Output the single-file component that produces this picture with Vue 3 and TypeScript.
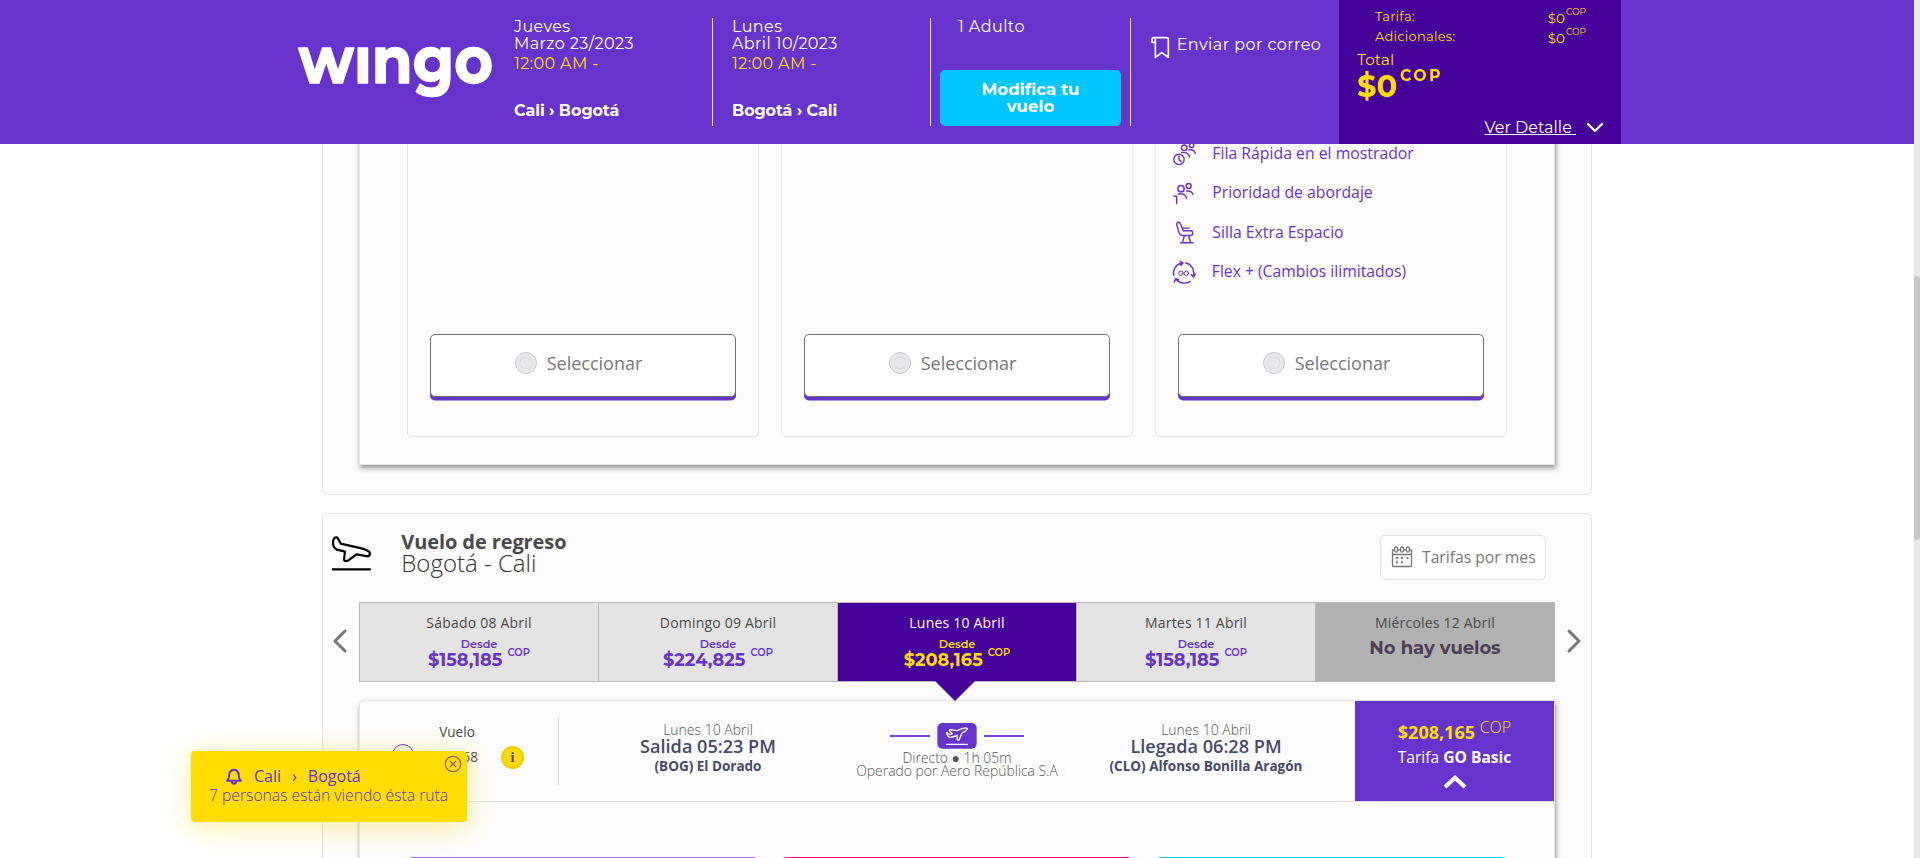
<script setup lang="ts">
interface Trip { day: string; date: string; time: string; route: string }
interface DayFare { date: string; price?: string; state?: 'active' | 'disabled' }

const trips: Trip[] = [
  { day: 'Jueves', date: 'Marzo 23/2023', time: '12:00 AM -', route: 'Cali › Bogotá' },
  { day: 'Lunes', date: 'Abril 10/2023', time: '12:00 AM -', route: 'Bogotá › Cali' },
]
const charges = ['Tarifa:', 'Adicionales:']
const days: DayFare[] = [
  { date: 'Sábado 08 Abril', price: '$158,185' },
  { date: 'Domingo 09 Abril', price: '$224,825' },
  { date: 'Lunes 10 Abril', price: '$208,165', state: 'active' },
  { date: 'Martes 11 Abril', price: '$158,185' },
  { date: 'Miércoles 12 Abril', state: 'disabled' },
]
const fares = ['violet', 'pink', 'cyan']
</script>

<template>
  <div class="page">
    <header class="top">
      <svg class="logo" viewBox="0 0 196 60" width="196" height="60">
        <text x="0.5" y="41" textLength="194.5" lengthAdjust="spacingAndGlyphs">wıngo</text>
      </svg>
      <section v-for="t in trips" :key="t.day" class="trip">
        <div>{{ t.day }}</div>
        <div>{{ t.date }}</div>
        <div class="time">{{ t.time }}</div>
        <strong>{{ t.route }}</strong>
      </section>
      <section class="people">
        <span>1 Adulto</span>
        <button class="modify">Modifica tu<br>vuelo</button>
      </section>
      <section class="mail">
        <svg viewBox="94 108 56 70" width="18.7" height="23.3">
          <path d="M104 127h-7v-10q0-4 5-4h38q6 0 6 5v54l-20-14-19 14v-56" />
        </svg>
        <span>Enviar por correo</span>
      </section>
      <section class="summary">
        <div v-for="c in charges" :key="c" class="charge">
          <span>{{ c }}</span><span class="amount">$0<sup>COP</sup></span>
        </div>
        <div class="total-label">Total</div>
        <div class="total">$0<sup>COP</sup></div>
        <div class="detail">
          <span>Ver Detalle&nbsp;</span>
          <svg viewBox="0 0 18 12" width="18" height="12"><path d="M2 2l7 7 7-7" /></svg>
        </div>
      </section>
    </header>

    <main>
      <section class="panel first">
        <div class="sheet">
          <div class="cards">
            <article v-for="(f, i) in fares" :key="f" class="card">
              <ul v-if="i === 2" class="features">
                <li>
                  <svg viewBox="96 31.6 76 76">
                    <circle cx="117" cy="90" r="15.5" /><path d="M117 80v10l6 6" />
                    <circle cx="133" cy="55" r="8.5" /><circle cx="155" cy="48" r="6.5" />
                    <path d="M125 69c13-1 22 4 24 14M147 61c10-1 17 3 19 11" />
                  </svg>
                  Fila Rápida en el mostrador
                </li>
                <li>
                  <svg viewBox="96 151 76 76">
                    <path d="M102 200h8v22" />
                    <circle cx="123" cy="177" r="9.5" /><circle cx="146" cy="169" r="7.5" />
                    <path d="M115 193c13-3 23 3 25 13M140 184c10-1 17 3 19 11" />
                  </svg>
                  Prioridad de abordaje
                </li>
                <li>
                  <svg viewBox="96 268.6 76 76">
                    <path d="M110 284c0-7 9-7 11-1l9 21h24c4 0 4 3 4 8s-2 6-6 6h-25c-6 0-8-3-10-8zM127 296h21M133 319l-5 20M146 319l6 20M122 340h37" />
                  </svg>
                  Silla Extra Espacio
                </li>
                <li class="flexible">
                  <svg viewBox="96 387 76 76">
                    <path d="M101 436c-3-20 9-35 27-37M120 394l9 5-6 7M137 399c17 3 27 19 24 38M154 434l7 7 5-8M151 454c-14 9-33 7-43-6M103 456l4-10 9 3" />
                    <circle cx="123" cy="430" r="6.5" class="thin" /><circle cx="139" cy="430" r="6.5" class="thin" />
                  </svg>
                  Flex + (Cambios ilimitados)
                </li>
              </ul>
              <button class="select"><i class="radio"></i>Seleccionar</button>
            </article>
          </div>
        </div>
      </section>

      <section class="panel second">
        <div class="heading">
          <svg class="landing" viewBox="66 109 118 106" width="39.3" height="35.3">
            <path d="M70 122q2-10 10-9 4 2 12 19l66 15q20 6 22 14 0 9-9 9l-31-6-23 17q-11 7-15-1l3-24-24-6q-15-7-11-28z" />
            <path d="M68 209h112" />
          </svg>
          <div class="titles">
            <h2>Vuelo de regreso</h2>
            <p>Bogotá - Cali</p>
          </div>
          <button class="monthly">
            <svg viewBox="0 0 22 22" width="22" height="22">
              <path d="M1.5 4h1.5M7 4h1.5M13 4h1.5M19 4h1.5M1.5 4v15.5q0 1 1 1h17q1 0 1-1V4M1.5 8.5h19" />
              <rect x="3.6" y="1" width="3" height="5" rx="1.5" /><rect x="9.5" y="1" width="3" height="5" rx="1.5" /><rect x="15.4" y="1" width="3" height="5" rx="1.5" />
              <path class="dots" d="M5 12h2M10 12h2M15.5 12h2M5 16.2h2M10 16.2h2" />
            </svg>
            Tarifas por mes
          </button>
        </div>

        <div class="dates">
          <svg class="arrow" viewBox="0 0 16 26" width="16" height="26"><path d="M13 3L3 13l10 10" /></svg>
          <div class="strip">
            <div v-for="d in days" :key="d.date" class="day" :class="d.state">
              <div class="date">{{ d.date }}</div>
              <template v-if="d.price">
                <div class="from">Desde</div>
                <div class="price">{{ d.price }} <sup>COP</sup></div>
              </template>
              <div v-else class="none">No hay vuelos</div>
            </div>
          </div>
          <svg class="arrow" viewBox="0 0 16 26" width="16" height="26"><path d="M3 3l10 10L3 23" /></svg>
        </div>

        <div class="sheet flight">
          <div class="row">
            <div class="number">
              <i class="radio ring"></i>
              <div class="code"><div>Vuelo</div><div class="id">P5658</div></div>
              <i class="info">i</i>
            </div>
            <div class="stop depart">
              <span>Lunes 10 Abril</span><b>Salida 05:23 PM</b><strong>(BOG) El Dorado</strong>
            </div>
            <div class="middle">
              <div class="line">
                <svg viewBox="351 430 120 78" width="40" height="26">
                  <rect x="352" y="430" width="118" height="77" rx="15" />
                  <path d="M380 458q0 10 8 15 14-1 23-6l1 13q3 5 6-1l8-19q16-9 16-13-3-5-15 0l-16 6-19-3q-7 0-1 6l6 6-8 3z" />
                  <path d="M380 494h62" />
                </svg>
              </div>
              <span>Directo ● 1h 05m</span>
              <span>Operado por Aero República S.A</span>
            </div>
            <div class="stop arrive">
              <span>Lunes 10 Abril</span><b>Llegada 06:28 PM</b><strong>(CLO) Alfonso Bonilla Aragón</strong>
            </div>
            <div class="fare">
              <div class="cost"><b>$208,165</b> <sup>COP</sup></div>
              <div class="kind">Tarifa <b>GO Basic</b></div>
              <svg viewBox="0 0 24 14" width="24" height="14"><path d="M2 12L12 2.8 22 12" /></svg>
            </div>
          </div>
          <div class="cards lower">
            <article v-for="f in fares" :key="f" class="card" :class="f"></article>
          </div>
        </div>
      </section>
    </main>

    <aside class="toast">
      <svg class="close" viewBox="0 0 18 18" width="18" height="18"><circle cx="9" cy="9" r="7.7" /><path d="M6.2 6.2l5.6 5.6M11.8 6.2l-5.6 5.6" /></svg>
      <div class="route">
        <svg viewBox="0 0 16 17" width="16" height="17"><path d="M1 12.8q2.2-1.6 2.2-5 0-5.6 4.8-6 4.8.4 4.8 6 0 3.4 2.2 5zM5.6 13.5q.4 2.2 2.4 2.2t2.4-2.2" /></svg>
        <span>Cali</span><span class="sep">›</span><span>Bogotá</span>
      </div>
      <p>7 personas están viendo ésta ruta</p>
    </aside>

    <div class="scrollbar"><i></i></div>
  </div>
</template>

<style>
html, body { overflow: hidden; background: #fff; }
</style>

<style scoped>
* { box-sizing: border-box; }
.page { position: relative; width: 1920px; height: 858px; overflow: hidden; background: #fff; font-family: "Open Sans", "Noto Sans", sans-serif; color: #4a4a4a; }
svg { fill: none; stroke: currentColor; stroke-linecap: round; stroke-linejoin: round; flex: none; }
button { font: inherit; color: inherit; margin: 0; }
h2, p, ul { margin: 0; padding: 0; }

/* top bar */
.top { position: relative; z-index: 2; display: flex; align-items: flex-start; width: 1914px; height: 144px; padding-left: 298px; background: #6633cc; color: #fff; font: 400 16px/17.2px "Montserrat", "Inter", sans-serif; }
.logo { margin-top: 42px; width: 196px; height: 60px; overflow: visible; }
.logo text { font: 700 65px "Montserrat", "Inter", sans-serif; fill: #fff; stroke: #fff; stroke-width: 1.6px; }
.trip { width: 218px; height: 108px; margin-top: 18px; padding-left: 19px; border-right: 1px solid rgba(255,255,255,.85); letter-spacing: .4px; white-space: nowrap; }
.logo + .trip { width: 199px; margin-left: 20px; padding-left: 0; }
.trip .time { margin-top: 2px; color: #ffdd00; line-height: 20px; }
.trip strong { display: block; margin-top: 27px; font-weight: 700; line-height: 20px; letter-spacing: -.1px; }
.people { width: 200px; height: 108px; margin-top: 18px; border-right: 1px solid rgba(255,255,255,.85); }
.people > span { display: block; padding-left: 27px; letter-spacing: .45px; }
.modify { display: block; width: 181px; height: 56px; margin: 35px 0 0 9px; padding: 0; border: 0; border-radius: 5px; background: #00c8ff; color: #fff; font-weight: 700; font-size: 16.6px; line-height: 17px; }
.mail { display: flex; width: 208px; padding: 36px 0 0 20px; letter-spacing: .45px; white-space: nowrap; }
.mail svg { stroke-width: 5; margin-right: 7px; }
.summary { width: 282px; height: 144px; padding-left: 18px; background: #440099; color: #ffdd00; }
.charge { display: flex; justify-content: space-between; height: 20px; padding: 6px 35px 0 18px; font-size: 13px; line-height: 20px; letter-spacing: .25px; }
.amount { font-size: 13.5px; line-height: 24px; letter-spacing: 0; }
sup { vertical-align: baseline; position: relative; line-height: 0; }
.amount sup { top: -8.5px; font-size: 9px; margin-left: 1px; }
.total-label { margin-top: 10px; line-height: 20px; font-size: 15.5px; }
.total { margin-top: -2px; font-weight: 700; font-size: 30.4px; line-height: 38px; }
.total sup { top: -16px; margin-left: 3px; font-size: 15.5px; letter-spacing: 2.6px; }
.detail { display: flex; align-items: center; justify-content: flex-end; margin-top: 12px; padding-right: 17px; line-height: 20px; color: #fff; }
.detail span { text-decoration: underline; margin-right: 10px; }
.detail svg { stroke-width: 2.4; }

/* panels */
main { width: 1270px; margin: -24px 0 0 322px; }
.panel { border: 1px solid #e6e6e6; background: #fcfcfc; }
.first { height: 375px; padding: 0 36px; border-radius: 0 0 5px 5px; }
.sheet { border: 1px solid #e6e6e6; background: #fcfcfc; box-shadow: 1px 3px 5px rgba(0,0,0,.42); }
.first .sheet { height: 344px; padding: 0 47px; border-top: 0; }
.cards { display: flex; gap: 22px; }
.card { display: flex; flex-direction: column; justify-content: flex-end; width: 352px; height: 316px; padding: 0 22px 39px; border: 1px solid #e6e6e6; border-top: 0; border-radius: 0 0 5px 5px; }
.features { flex: 1; list-style: none; padding: 12px 0 0; margin-left: -6px; color: #6633cc; }
.features li { display: flex; align-items: center; height: 39.5px; font-size: 15.8px; line-height: 22px; white-space: nowrap; }
.features svg { width: 25.3px; height: 25.3px; margin-right: 15px; stroke-width: 4.3; }
.features .flexible { font-size: 15.7px; }
.features .flexible svg { margin-right: 14.5px; }
.features .thin { stroke-width: 3; }
.select { display: flex; align-items: center; justify-content: center; height: 63px; padding: 0 9px 6px 0; border: 1px solid #707070; border-radius: 5px; background: #fff; box-shadow: 0 3.4px 0 #6633cc; color: #777; font-size: 18px; }
.radio { width: 22px; height: 22px; margin-right: 10px; border: 1px solid #c4c6c8; border-radius: 50%; background: radial-gradient(circle, #e8e9eb 5px, #dadbdd 6px, #e8e9eb 7px); }

.second { height: 420px; margin-top: 18px; padding: 0 9px; border-radius: 5px 5px 0 0; }
.heading { display: flex; height: 88px; padding-right: 36px; }
.landing { margin-top: 22px; color: #000; stroke-width: 6.5; }
.titles { flex: 1; margin: 15px 0 0 30px; }
h2 { font-size: 20px; line-height: 24px; font-weight: 700; letter-spacing: -.1px; padding-top: 1px; }
.titles p { margin-top: -4.6px; font-size: 24px; line-height: 28px; font-weight: 300; color: #333; }
.monthly { display: flex; align-items: center; width: 166px; height: 45px; margin-top: 21px; padding: 0 0 2px 10px; border: 1px solid #e3e3e3; border-radius: 5px; background: #fff; color: #777; font-size: 15.7px; white-space: nowrap; }
.monthly svg { margin-right: 9px; stroke-width: 1.3; }
.monthly .dots { stroke-width: 2; stroke-linecap: butt; }
.dates { display: flex; align-items: center; height: 80px; }
.arrow { margin-bottom: 3px; color: #777; stroke-width: 3; }
.strip { display: flex; width: 1196px; height: 80px; margin: 0 11px 0 11px; border: 1px solid #b9b9b9; }
.day { position: relative; flex: 1; padding-top: 10px; border-left: 1px solid #b9b9b9; background: #e4e4e4; text-align: center; }
.day:first-child { border-left: 0; }
.date { font-size: 14px; line-height: 20px; letter-spacing: .2px; }
.from { margin-top: 4px; color: #6633cc; font: 600 11.2px/14px "Montserrat", "Inter", sans-serif; }
.price { color: #6633cc; font: 700 17.8px/18px "Montserrat", "Inter", sans-serif; white-space: nowrap; }
.price sup { top: -10px; font-size: 10px; font-weight: 600; }
.active { background: #440099; color: #fff; }
.active .from, .active .price { color: #ffdd00; }
.active::after { content: ""; position: absolute; left: 97px; bottom: -20px; border: 20px solid transparent; border-width: 20px 20px 0; border-top-color: #440099; z-index: 1; }
.disabled { background: #b1b1b1; }
.none { margin-top: 2px; color: #4b4056; font: 700 18px/27px "Montserrat", "Inter", sans-serif; letter-spacing: -.05px; }

.flight { height: 200px; width: 1196px; margin: 18px 0 0 27px; border-radius: 5px 0 0 0; }
.row { display: flex; height: 101px; border-bottom: 1px solid #dedede; }
.number { display: flex; width: 199px; height: 68px; margin-top: 16px; border-right: 1px solid #dedede; font-size: 13.6px; line-height: 25px; }
.ring { margin: 27px 8px 0 32px; border-color: #6633cc; background: #eee; }
.code { width: 62px; margin-left: 4px; padding-top: 2px; text-align: center; }
.code .id { padding-left: 3px; }
.info { width: 23px; height: 23px; margin: 29px 0 0 13px; border: 2px solid #f6cb08; border-radius: 50%; background: #ffdd00; color: #6633cc; font: 700 14px/19px "Liberation Serif", serif; text-align: center; }
.stop { display: flex; flex-direction: column; align-items: center; padding-top: 20px; white-space: nowrap; }
.stop span { font-size: 14px; font-weight: 300; line-height: 18px; color: #555; }
.stop b { margin-top: -2px; font-size: 18.1px; font-weight: 600; line-height: 18px; color: #47496b; }
.stop strong { padding-top: 1px; font-size: 13.5px; font-weight: 700; line-height: 20px; color: #47496b; }
.depart { width: 298px; }
.middle { display: flex; flex-direction: column; align-items: center; width: 200px; white-space: nowrap; font-size: 13.9px; font-weight: 300; line-height: 13px; color: #555; }
.line { display: flex; justify-content: space-between; align-items: center; width: 134px; margin: 22px 0 2px; color: #fff; }
.line::before, .line::after { content: ""; width: 40px; height: 2px; background: #6633cc; opacity: .9; }
.line svg { stroke-width: 4; }
.line rect { fill: #6633cc; stroke: none; }
.arrive { width: 298px; }
.fare { display: flex; flex-direction: column; align-items: center; width: 199px; height: 100px; padding-top: 17px; background: #6633cc; color: #fff; font-size: 15.6px; white-space: nowrap; }
.cost { color: #ffdd00; font-size: 18px; line-height: 28px; }
.cost sup { top: -6.5px; font-size: 16px; font-weight: 300; }
.kind { line-height: 22px; }
.kind b { font-weight: 700; }
.fare svg { margin-top: 7px; stroke-width: 4; stroke-linecap: butt; stroke-linejoin: miter; }
.lower { margin: 55px 0 0 47px; }
.lower .card { height: 30px; border-top: 2px solid; border-radius: 6px 6px 0 0; }
.lower .violet { border-top-color: #b266e6; }
.lower .pink { border-top-color: #ec0a92; }
.lower .cyan { border-top-color: #10c4f4; }

/* live visitors notice */
.toast { position: absolute; z-index: 3; left: 191px; top: 751px; width: 276px; height: 71px; padding: 16px 0 0 18px; border-radius: 4px; background: #ffdd00; box-shadow: 0 4px 30px rgba(255,221,0,.4); color: #6633cc; }
.close { position: absolute; right: 5px; top: 4px; stroke-width: 1.3; opacity: .7; }
.route { display: flex; align-items: center; padding-left: 17px; font-size: 16px; line-height: 18px; }
.route svg { margin-right: 12px; stroke-width: 1.9; }
.route .sep { margin: 0 11px; }
.toast p { font-size: 15.7px; font-weight: 300; line-height: 20px; white-space: nowrap; }

.scrollbar { position: absolute; z-index: 4; top: 0; right: 0; width: 6px; height: 858px; padding-top: 276px; background: #e8e9eb; }
.scrollbar i { display: block; height: 264px; border-radius: 3px; background: #c6c7c9; }
</style>
